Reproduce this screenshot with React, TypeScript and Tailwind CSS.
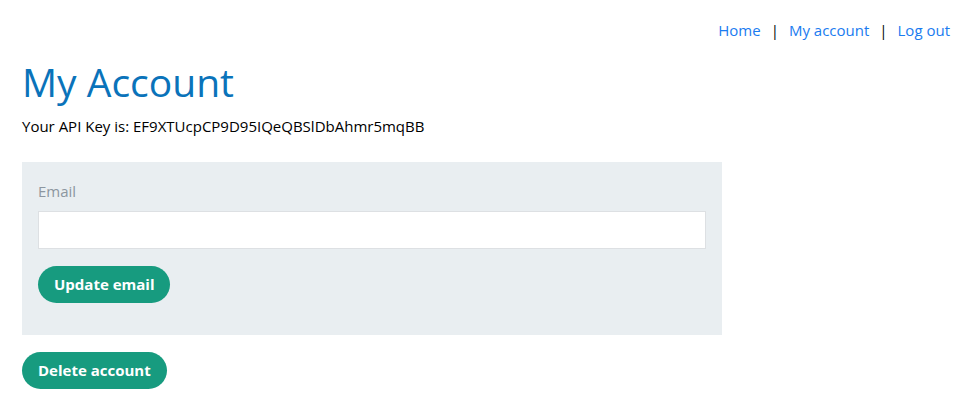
import React from 'react';

const App: React.FC = () => {
  return (
    <div className="min-h-screen bg-white text-[15px] text-black" style={{ fontFamily: '"Open Sans", "Noto Sans", sans-serif' }}>
      {/* Nav */}
      <nav className="flex justify-end items-center gap-[10px] pt-[19px] pr-[12px] text-[#1a7bf0]">
        <a href="#">Home</a>
        <span className="text-black">|</span>
        <a href="#">My account</a>
        <span className="text-black">|</span>
        <a href="#">Log out</a>
      </nav>

      <main className="px-[22px]">
        <h1 className="text-[39px] leading-[48px] text-[#0a73ba] mt-[16px]">My Account</h1>
        <p className="mt-[10px] leading-[20px]">Your API Key is: EF9XTUcpCP9D95IQeQBSlDbAhmr5mqBB</p>

        {/* Email form */}
        <form className="mt-[26px] w-[700px] bg-[#e9eef1] px-[16px] pt-[19px] pb-[32px]">
          <label className="block text-[#8c96a0] leading-[20px]">Email</label>
          <input type="email" className="mt-[10px] block w-full h-[38px] bg-white border border-[#dde0e3] outline-none" />
          <button type="button" className="mt-[17px] h-[37px] px-[16px] rounded-full bg-[#179b7f] text-white font-bold">
            Update email
          </button>
        </form>

        <button type="button" className="mt-[17px] h-[37px] px-[16px] rounded-full bg-[#179b7f] text-white font-bold">
          Delete account
        </button>
      </main>
    </div>
  );
};

export default App;
